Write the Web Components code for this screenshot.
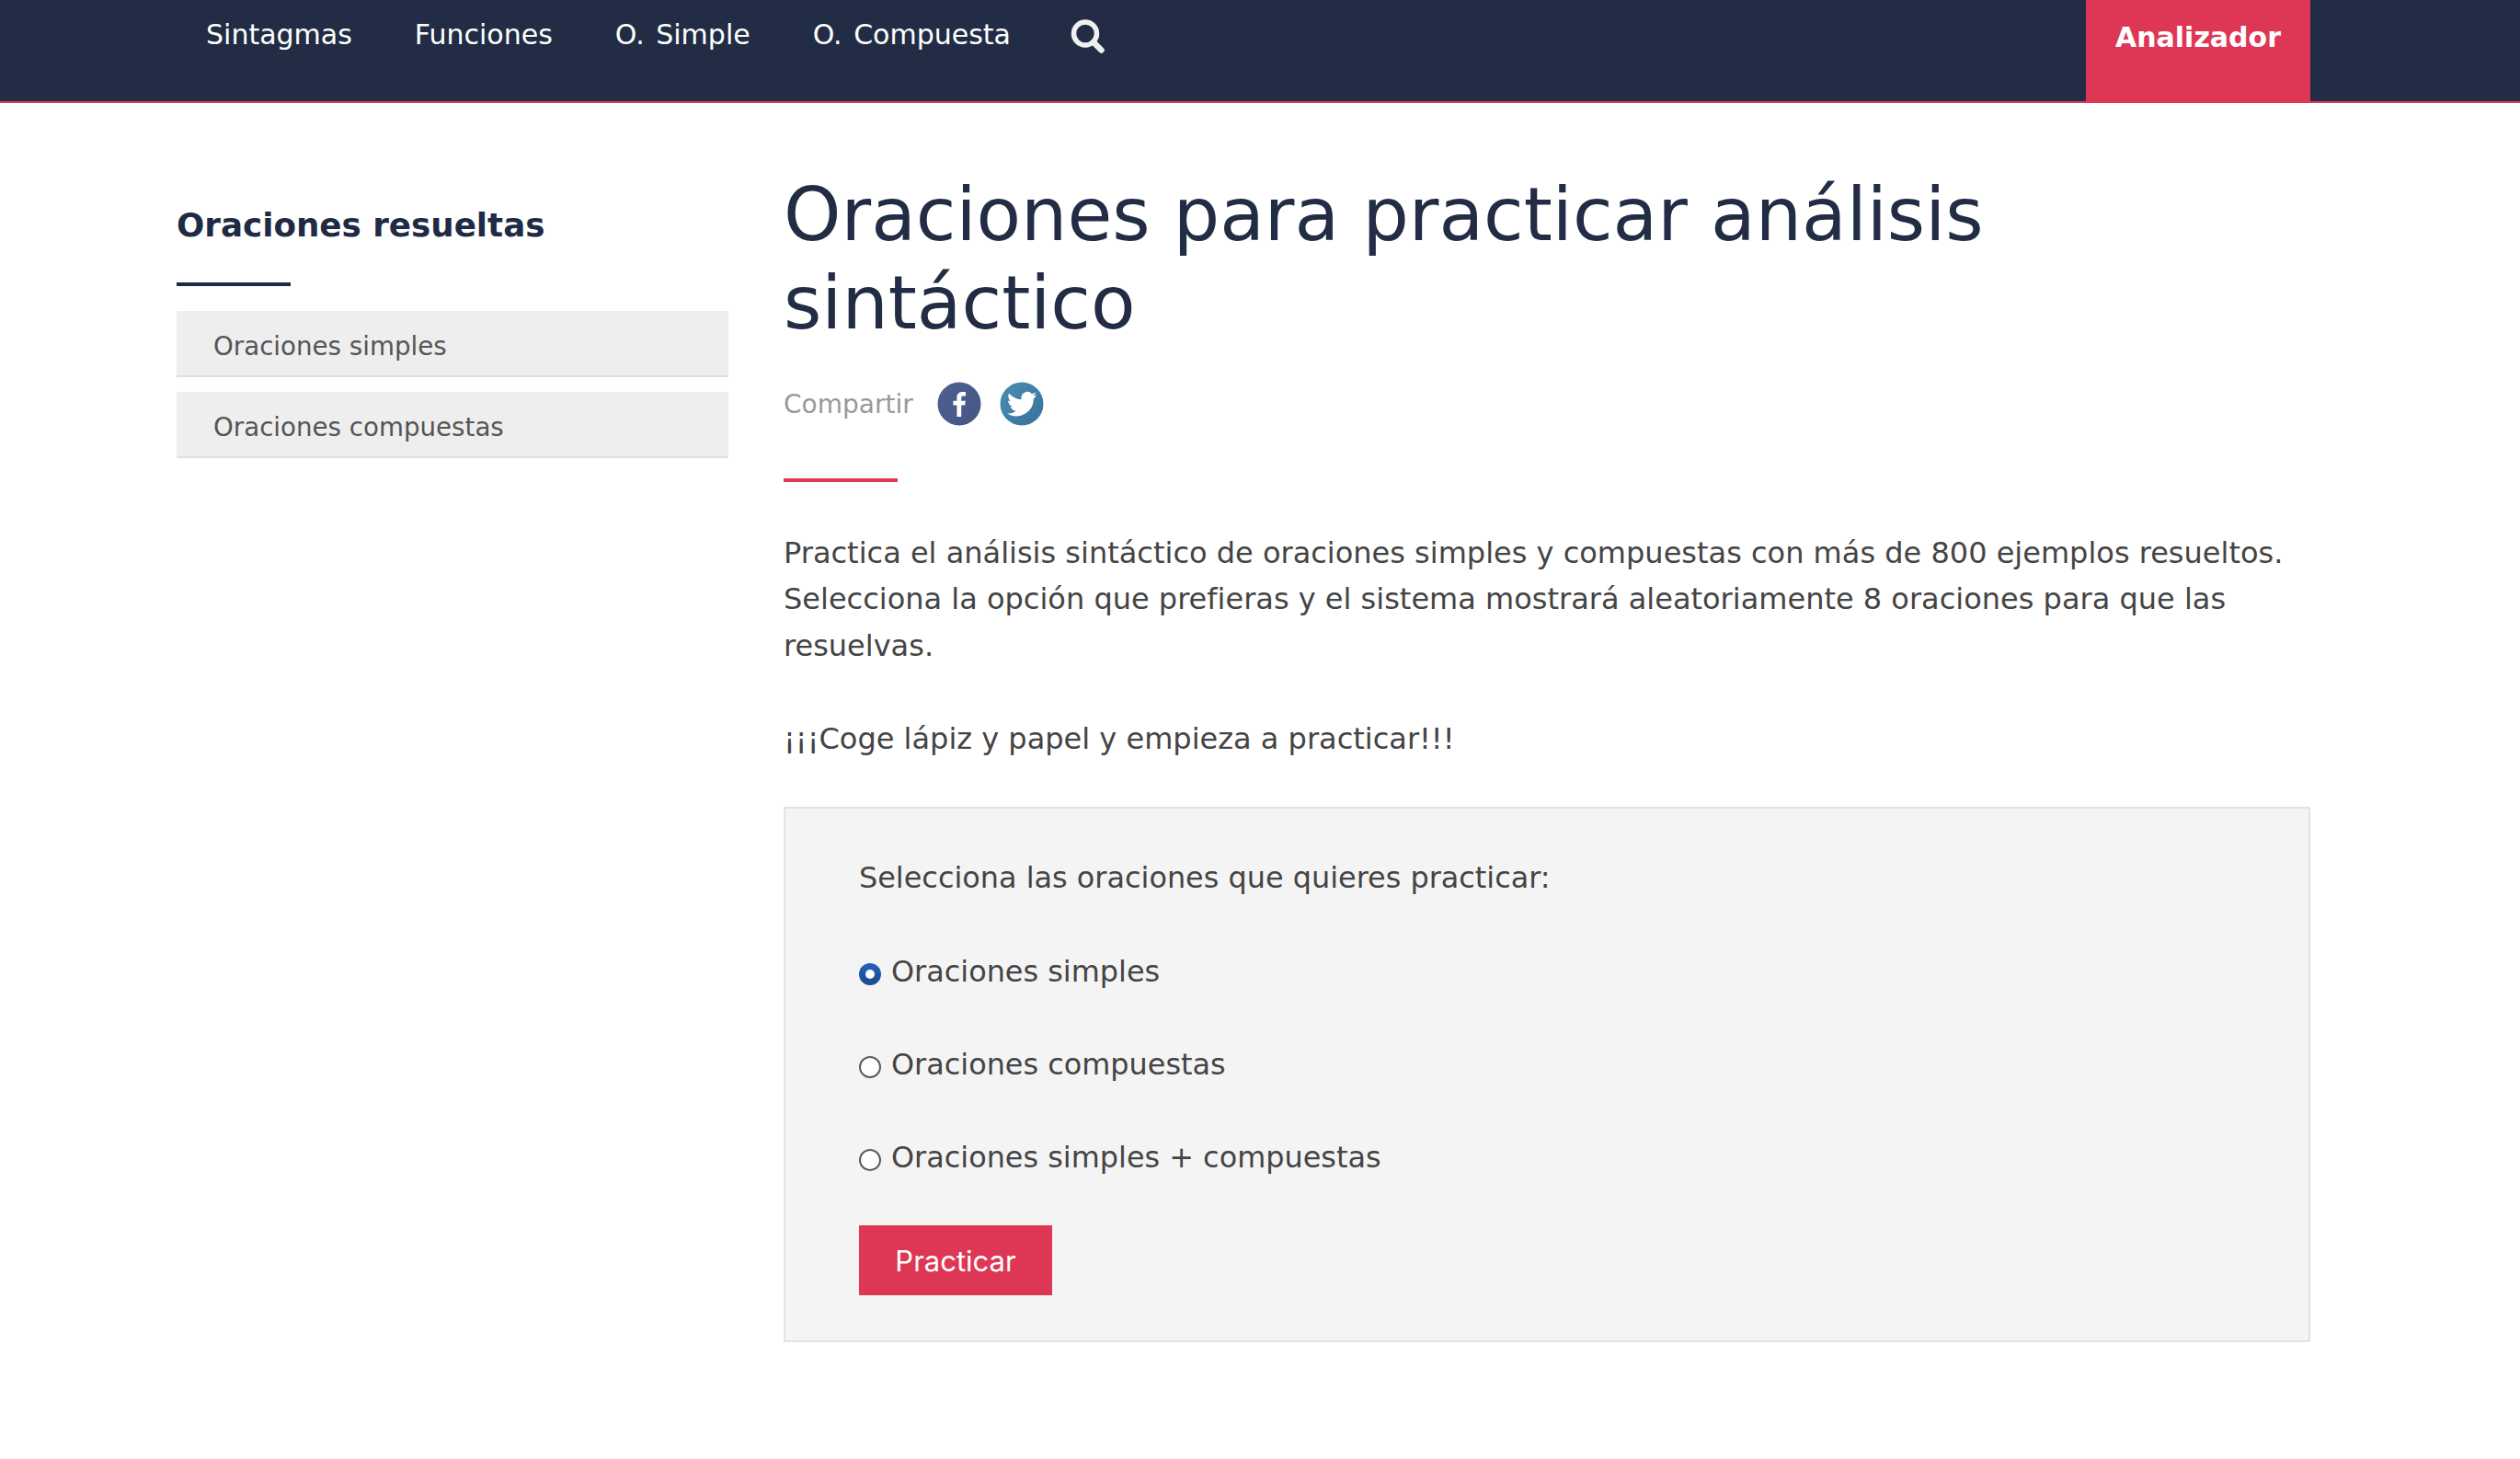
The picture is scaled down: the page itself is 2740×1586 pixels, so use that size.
<!DOCTYPE html>
<html lang="es">
<head>
<meta charset="utf-8">
<title>Oraciones para practicar</title>
<style>
    html, body { margin: 0; padding: 0; background: #fff; }
    body { font-family: "DejaVu Sans", sans-serif; }
</style>
</head>
<body>
<site-nav></site-nav>
<page-layout>
    <side-menu slot="side" title="Oraciones resueltas">
        <side-item>Oraciones simples</side-item>
        <side-item>Oraciones compuestas</side-item>
    </side-menu>
    <main-title>Oraciones para practicar análisis sintáctico</main-title>
    <share-bar></share-bar>
    <intro-text>
        <p>Practica el análisis sintáctico de oraciones simples y compuestas con más de 800 ejemplos resueltos. Selecciona la opción que prefieras y el sistema mostrará aleatoriamente 8 oraciones para que las resuelvas.</p>
        <p>¡¡¡Coge lápiz y papel y empieza a practicar!!!</p>
    </intro-text>
    <practice-form>
        <radio-option checked>Oraciones simples</radio-option>
        <radio-option>Oraciones compuestas</radio-option>
        <radio-option>Oraciones simples + compuestas</radio-option>
    </practice-form>
</page-layout>

<script>
class SiteNav extends HTMLElement {
    constructor() {
        super();
        this.shadowDOM = this.attachShadow({ mode: "open" });
    }
    connectedCallback() {
        this.shadowDOM.innerHTML = `
        <style>
            :host {
                display: block;
                background: #222d45;
                border-bottom: 2px solid #de3755;
                font-family: "DejaVu Sans", sans-serif;
                color: #fff;
            }
            nav {
                display: flex;
                justify-content: space-between;
                width: 2320px;
                height: 110px;
                margin-left: 192px;
            }
            ul {
                display: flex;
                gap: 68px;
                list-style: none;
                margin: 0;
                padding: 19px 0 0 32px;
                font-size: 30px;
                line-height: 38px;
                word-spacing: 3px;
            }
            svg { display: block; margin: 2px 0 0 -3px; }
            .cta {
                width: 244px;
                height: 112px;
                background: #de3755;
                font-size: 30px;
                font-weight: bold;
                line-height: 40px;
                padding-top: 21px;
                box-sizing: border-box;
                text-align: center;
            }
        </style>
        <nav>
            <ul>
                <li>Sintagmas</li>
                <li>Funciones</li>
                <li>O. Simple</li>
                <li>O. Compuesta</li>
                <li>
                    <svg width="38" height="38" viewBox="0 0 38 38">
                        <circle cx="16" cy="15.500" r="12.500" fill="none" stroke="#f0f0f0" stroke-width="5.500"/>
                        <path d="M25 25 L33.500 33.500" stroke="#f0f0f0" stroke-width="6.500" stroke-linecap="round"/>
                    </svg>
                </li>
            </ul>
            <div class="cta">Analizador</div>
        </nav>`;
    }
}

class PageLayout extends HTMLElement {
    constructor() {
        super();
        this.attachShadow({ mode: "open" }).innerHTML = `
        <style>
            :host {
                display: grid;
                grid-template-columns: 600px 1660px;
                column-gap: 60px;
                width: 2320px;
                margin-left: 192px;
            }
            .main { padding-top: 74px; }
        </style>
        <aside><slot name="side"></slot></aside>
        <div class="main"><slot></slot></div>`;
    }
}

class SideMenu extends HTMLElement {
    constructor() {
        super();
        this.attachShadow({ mode: "open" }).innerHTML = `
        <style>
            :host {
                display: block;
                padding-top: 106px;
                font-family: "DejaVu Sans", sans-serif;
            }
            h2 {
                margin: 0;
                color: #1f2a44;
                font-size: 35.7px;
                line-height: 54px;
                font-weight: bold;
            }
            .rule {
                width: 124px;
                height: 4px;
                margin: 35px 0 27px;
                background: #1f2a44;
            }
        </style>
        <h2></h2>
        <div class="rule"></div>
        <slot></slot>`;
    }
    connectedCallback() {
        this.shadowRoot.querySelector("h2").textContent = this.getAttribute("title");
        this.removeAttribute("title");
    }
}

class SideItem extends HTMLElement {
    constructor() {
        super();
        this.attachShadow({ mode: "open" }).innerHTML = `
        <style>
            :host {
                display: block;
                box-sizing: border-box;
                height: 72px;
                margin-bottom: 16px;
                padding: 19px 40px 0;
                background: #eeeeee;
                border-bottom: 2px solid #dfdfdf;
                color: #555;
                font-size: 27.7px;
                line-height: 40px;
            }
        </style>
        <slot></slot>`;
    }
}

class MainTitle extends HTMLElement {
    constructor() {
        super();
        this.attachShadow({ mode: "open" }).innerHTML = `
        <style>
            :host {
                display: block;
                color: #222d45;
                font-size: 79.4px;
                line-height: 96px;
            }
        </style>
        <slot></slot>`;
    }
}

class ShareBar extends HTMLElement {
    constructor() {
        super();
        this.attachShadow({ mode: "open" }).innerHTML = `
        <style>
            :host {
                display: block;
                margin-top: 37px;
            }
            .row {
                display: flex;
                align-items: center;
                height: 48px;
                color: #999;
                font-size: 28px;
            }
            span { margin-right: 26px; }
            svg { display: block; margin-right: 20px; }
            .rule {
                width: 124px;
                height: 4px;
                margin-top: 57px;
                background: #de3755;
            }
        </style>
        <div class="row">
            <span>Compartir</span>
            <svg width="48" height="48" viewBox="0 0 48 48">
                <defs>
                    <linearGradient id="fb" x1="0" y1="0" x2="1" y2="1">
                        <stop offset="0" stop-color="#4e5e90"/>
                        <stop offset="1" stop-color="#465684"/>
                    </linearGradient>
                </defs>
                <circle cx="24" cy="24" r="23.500" fill="url(#fb)"/>
                <path d="M26.200 38V25.500h4l.6-4.800h-4.600v-3c0-1.400.4-2.300 2.300-2.300h2.500v-4.300c-.4-.1-1.900-.2-3.600-.2-3.600 0-6 2.200-6 6.200v3.600h-4v4.800h4V38z" fill="#fff"/>
            </svg>
            <svg width="48" height="48" viewBox="0 0 48 48">
                <defs>
                    <linearGradient id="tw" x1="0" y1="0" x2="1" y2="1">
                        <stop offset="0" stop-color="#4a8fb4"/>
                        <stop offset="1" stop-color="#38709a"/>
                    </linearGradient>
                </defs>
                <circle cx="24" cy="24" r="23.500" fill="url(#tw)"/>
                <path d="M40 14.200c-1.200.5-2.400.9-3.700 1 1.300-.8 2.400-2 2.900-3.600-1.300.7-2.700 1.300-4.200 1.600a6.600 6.600 0 0 0-11.300 6C18.300 19 13.400 16.400 10.200 12.400a6.600 6.600 0 0 0 2 8.800c-1.100 0-2.100-.3-3-.8v.1c0 3.200 2.300 5.900 5.300 6.500-1 .3-2 .3-3 .1.900 2.600 3.300 4.500 6.200 4.600A13.200 13.200 0 0 1 8 34.400 18.700 18.700 0 0 0 36.800 18.600c1.300-.9 2.400-2.500 3.200-4.400z" fill="#fff"/>
            </svg>
        </div>
        <div class="rule"></div>`;
    }
}

class IntroText extends HTMLElement {
    constructor() {
        super();
        this.attachShadow({ mode: "open" }).innerHTML = `
        <style>
            :host {
                display: block;
                margin-top: 52px;
                color: #444;
                font-size: 32px;
                line-height: 50.4px;
            }
            ::slotted(p) { margin: 0 0 50.4px; }
        </style>
        <slot></slot>`;
    }
}

class PracticeForm extends HTMLElement {
    constructor() {
        super();
        this.attachShadow({ mode: "open" }).innerHTML = `
        <style>
            :host {
                display: block;
                box-sizing: border-box;
                height: 582px;
                padding: 50px 80px 0;
                margin-top: -1px;
                background: #f4f4f4;
                border: 2px solid #e3e3e3;
                color: #444;
                font-size: 31.9px;
            }
            .label { line-height: 50px; margin-bottom: 52px; }
            .options {
                display: flex;
                flex-direction: column;
                gap: 51px;
            }
            button {
                display: block;
                width: 210px;
                height: 76px;
                margin-top: 49px;
                padding: 0;
                border: 0;
                background: #de3755;
                color: #fff;
                font-family: Inter, sans-serif;
                font-size: 31px;
            }
        </style>
        <div class="label">Selecciona las oraciones que quieres practicar:</div>
        <div class="options"><slot></slot></div>
        <button type="button">Practicar</button>`;
    }
}

class RadioOption extends HTMLElement {
    constructor() {
        super();
        this.attachShadow({ mode: "open" }).innerHTML = `
        <style>
            :host {
                display: flex;
                align-items: center;
                gap: 11px;
                height: 50px;
                line-height: 50px;
            }
            .dot {
                box-sizing: border-box;
                display: flex;
                align-items: center;
                justify-content: center;
                width: 24px;
                height: 24px;
                margin-top: 6px;
                border-radius: 50%;
                border: 2px solid #5c5c5c;
                background: #fff;
            }
            :host([checked]) .dot {
                border: 0;
                background: linear-gradient(#2562bb, #1b4a90);
            }
            :host([checked]) .dot::after {
                content: "";
                width: 10px;
                height: 10px;
                border-radius: 50%;
                background: #fff;
            }
        </style>
        <span class="dot"></span>
        <span><slot></slot></span>`;
    }
}

customElements.define("site-nav", SiteNav);
customElements.define("page-layout", PageLayout);
customElements.define("side-menu", SideMenu);
customElements.define("side-item", SideItem);
customElements.define("main-title", MainTitle);
customElements.define("share-bar", ShareBar);
customElements.define("intro-text", IntroText);
customElements.define("practice-form", PracticeForm);
customElements.define("radio-option", RadioOption);
</script>
</body>
</html>
